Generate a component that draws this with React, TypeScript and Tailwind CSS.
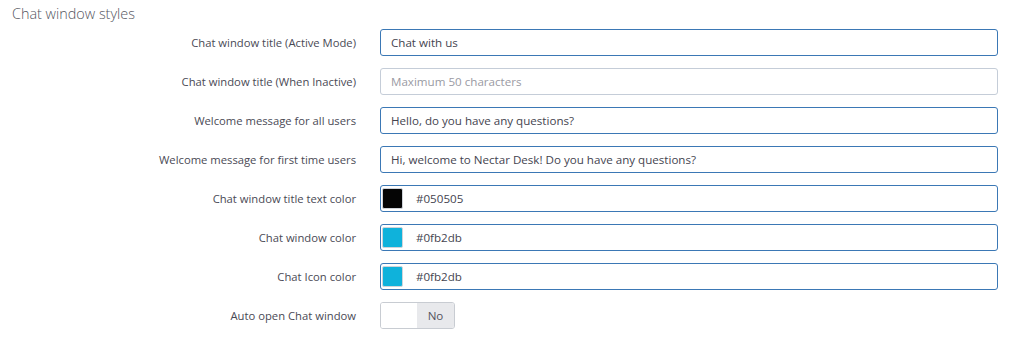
import React from "react";

const labelCls =
  "w-[356px] shrink-0 text-right text-[11.25px] text-[#4a4a55] leading-none";

function Row({ label, children }: { label: string; children: React.ReactNode }) {
  return (
    <div className="flex items-center gap-[24px] h-[27px]">
      <div className={labelCls}>{label}</div>
      <div className="flex-1">{children}</div>
    </div>
  );
}

function TextInput({ value, placeholder }: { value?: string; placeholder?: string }) {
  return (
    <div
      className={
        "h-[27px] rounded-[3px] border flex items-center pl-[10px] text-[11.6px] " +
        (value
          ? "border-[#3b78b5] text-[#44444f]"
          : "border-[#c5cdd8] text-[#9a9aa3]")
      }
    >
      {value ?? placeholder}
    </div>
  );
}

function ColorInput({ color, value }: { color: string; value: string }) {
  return (
    <div className="h-[27px] rounded-[3px] border border-[#3b78b5] flex items-center pl-[1px] text-[11.6px] text-[#44444f]">
      <div
        className="w-[21px] h-[21px] rounded-[2px] border border-[#d0d4da]"
        style={{ backgroundColor: color }}
      />
      <span className="ml-[13px]">{value}</span>
    </div>
  );
}

export default function App() {
  return (
    <div
      className="w-[1023px] h-[342px] bg-white"
      style={{ fontFamily: '"Open Sans", "Noto Sans", sans-serif' }}
    >
      <div className="pl-[12px] pt-[4px] text-[14.4px] font-light text-[#555560] leading-[20px]">
        Chat window styles
      </div>
      <div className="pr-[25px] mt-[5px] flex flex-col gap-[12px]">
        <Row label="Chat window title (Active Mode)">
          <TextInput value="Chat with us" />
        </Row>
        <Row label="Chat window title (When Inactive)">
          <TextInput placeholder="Maximum 50 characters" />
        </Row>
        <Row label="Welcome message for all users">
          <TextInput value="Hello, do you have any questions?" />
        </Row>
        <Row label="Welcome message for first time users">
          <TextInput value="Hi, welcome to Nectar Desk! Do you have any questions?" />
        </Row>
        <Row label="Chat window title text color">
          <ColorInput color="#050505" value="#050505" />
        </Row>
        <Row label="Chat window color">
          <ColorInput color="#0fb2db" value="#0fb2db" />
        </Row>
        <Row label="Chat Icon color">
          <ColorInput color="#0fb2db" value="#0fb2db" />
        </Row>
        <Row label="Auto open Chat window">
          <div className="flex h-[27px] w-[75px] rounded-[3px] border border-[#c8ccd2] overflow-hidden text-[11.6px]">
            <div className="w-[36px] bg-white" />
            <div className="flex-1 bg-[#e8e9ec] flex items-center justify-center text-[#555560]">
              No
            </div>
          </div>
        </Row>
      </div>
    </div>
  );
}
